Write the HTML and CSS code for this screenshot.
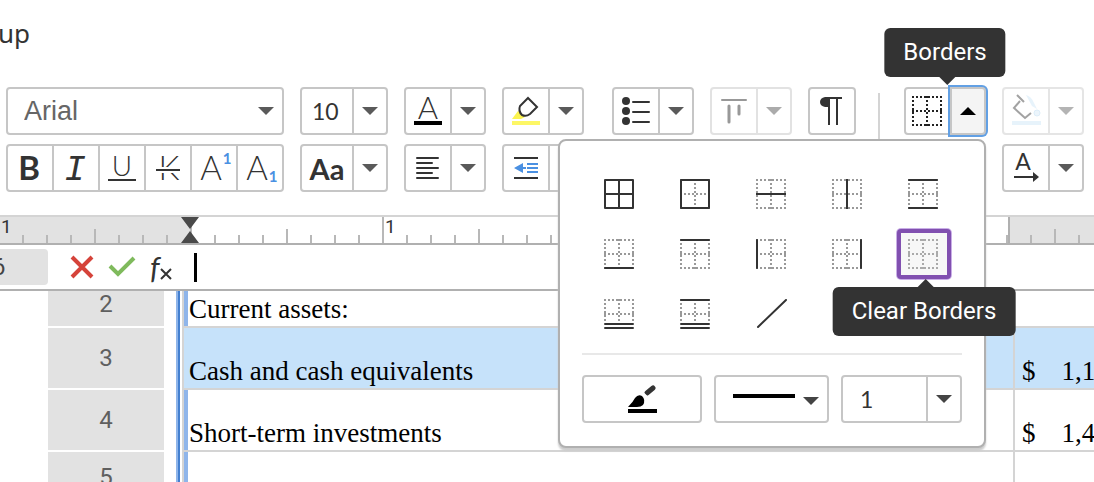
FILE: index.html
```html
<!DOCTYPE html>
<html lang="en">
<head>
<meta charset="utf-8">
<title>Spreadsheet editor</title>
<link rel="stylesheet" href="styles.css">
</head>
<body>
<svg class="defs" aria-hidden="true">
  <symbol id="down" viewBox="0 0 16 8"><path d="M0 0H16L8 8Z" fill="currentColor"/></symbol>
  <symbol id="up" viewBox="0 0 16 8"><path d="M0 8H16L8 0Z" fill="currentColor"/></symbol>
  <symbol id="dots" viewBox="0 0 32 30"><path d="M0 1H30M0 15H30M0 29H30M1 0V30M15 0V30M29 0V30" fill="none" stroke="currentColor" stroke-width="2" stroke-dasharray="2 2"/></symbol>
</svg>
<div class="app">
  <header class="tabs"><span>up</span></header>

  <div class="toolbar">
    <div class="stack">
      <div class="select-box">
        <select aria-label="Font"><option>Arial</option></select>
        <svg class="caret"><use href="#down"/></svg>
      </div>
      <div class="segments">
        <button aria-label="Bold"><svg class="ico"><text x="22" y="35" class="g bold">B</text></svg></button>
        <button aria-label="Italic"><svg class="ico"><text x="22" y="35" class="g slab">I</text></svg></button>
        <button aria-label="Underline"><svg class="ico"><text x="23" y="31" class="g under">U</text><path class="line" d="M9 35H37"/></svg></button>
        <button aria-label="Strikethrough"><svg class="ico"><text x="24" y="35" class="g">K</text><path d="M10 25H36" stroke="#fff" stroke-width="6"/><path class="line" d="M11 25H35"/></svg></button>
        <button aria-label="Superscript"><svg class="ico"><text x="20" y="35" class="g">A</text><text x="36" y="19" class="g mini">1</text></svg></button>
        <button aria-label="Subscript"><svg class="ico"><text x="20" y="35" class="g">A</text><text x="36" y="37" class="g mini">1</text></svg></button>
      </div>
    </div>

    <div class="stack">
      <div class="split wide">
        <input class="main" aria-label="Font size" value="10">
        <button class="drop" aria-label="Font sizes"><svg class="caret"><use href="#down"/></svg></button>
      </div>
      <div class="split wide">
        <button class="main case">Aa</button>
        <button class="drop" aria-label="Text case options"><svg class="caret"><use href="#down"/></svg></button>
      </div>
    </div>

    <div class="stack">
      <div class="split">
        <button class="main" aria-label="Text color"><svg class="ico"><text x="23" y="31" class="g color">A</text><path d="M9 33H37V37H9Z"/></svg></button>
        <button class="drop" aria-label="Text colors"><svg class="caret"><use href="#down"/></svg></button>
      </div>
      <div class="split">
        <button class="main" aria-label="Align left"><svg class="ico"><path class="line round" d="M12 13H33M12 18H27M12 23H33M12 28H27M12 33H33"/></svg></button>
        <button class="drop" aria-label="Alignments"><svg class="caret"><use href="#down"/></svg></button>
      </div>
    </div>

    <div class="stack">
      <div class="split">
        <button class="main" aria-label="Highlight color"><svg class="ico"><path d="M9 31L15 23L22 29L18 31Z" fill="#fbf34f"/><path d="M9 33H37V37H9Z" fill="#fdf765"/><path d="M25 10L34 19L27 26Q23 29 19 27Q15 23 17 18Z" fill="#fff" stroke="#333" stroke-width="2"/></svg></button>
        <button class="drop" aria-label="Highlight colors"><svg class="caret"><use href="#down"/></svg></button>
      </div>
      <div class="split">
        <button class="main" aria-label="Decrease indent"><svg class="ico"><path class="line" d="M11 13H35M11 33H35"/><path d="M11 23L20 18V22H23V24H20V28Z" fill="#4a90e2"/><path d="M24 19H35M24 23H35M24 27H35" stroke="#4a90e2" stroke-width="2"/></svg></button>
        <button class="drop" aria-label="Indents"><svg class="caret"><use href="#down"/></svg></button>
      </div>
    </div>

    <div class="stack after-group">
      <div class="split">
        <button class="main" aria-label="Bulleted list"><svg class="ico"><g fill="#333"><circle cx="13" cy="13" r="4"/><circle cx="13" cy="23" r="4"/><circle cx="13" cy="33" r="4"/></g><path class="line round" d="M20 14H36M20 24H36M20 34H36"/></svg></button>
        <button class="drop" aria-label="List styles"><svg class="caret"><use href="#down"/></svg></button>
      </div>
    </div>

    <div class="stack">
      <div class="split dim">
        <button class="main" disabled aria-label="Vertical align"><svg class="ico"><path class="line round" d="M11 12H35"/><path d="M18 18V34M28 18V26" stroke="#333" stroke-width="3" stroke-linecap="round"/></svg></button>
        <button class="drop" disabled aria-label="Vertical alignments"><svg class="caret"><use href="#down"/></svg></button>
      </div>
    </div>

    <div class="stack">
      <div class="split">
        <button class="main single" aria-label="Paragraph marks"><svg class="ico"><path d="M16 9H21V19H16Q11 18 11 14Q11 10 16 9Z" fill="#333"/><path class="line" d="M16 10H33M20 10V37M28 10V37"/></svg></button>
      </div>
    </div>

    <div class="rule"></div>

    <div class="stack anchor">
      <div class="split">
        <button class="main" aria-label="Apply borders"><svg class="cell strong"><use href="#dots"/></svg></button>
        <button class="drop open" aria-label="Borders" aria-expanded="true"><svg class="caret"><use href="#up"/></svg></button>
      </div>
      <div class="tip above" role="tooltip">Borders</div>

      <div class="popup">
        <div class="choices">
          <button aria-label="All borders"><svg class="cell"><path class="line round" d="M1 1H29V29H1ZM15 1V29M1 15H29"/></svg></button>
          <button aria-label="Outside borders"><svg class="cell"><use href="#dots"/><path class="line round" d="M1 1H29V29H1Z"/></svg></button>
          <button aria-label="Inside horizontal border"><svg class="cell"><use href="#dots"/><path class="line" d="M0 15H30"/></svg></button>
          <button aria-label="Inside vertical border"><svg class="cell"><use href="#dots"/><path class="line" d="M15 0V30"/></svg></button>
          <button aria-label="Top and bottom borders"><svg class="cell"><use href="#dots"/><path class="line round" d="M1 1H29M1 29H29"/></svg></button>
          <button aria-label="Bottom border"><svg class="cell"><use href="#dots"/><path class="line round" d="M1 29H29"/></svg></button>
          <button aria-label="Top border"><svg class="cell"><use href="#dots"/><path class="line round" d="M1 1H29"/></svg></button>
          <button aria-label="Left border"><svg class="cell"><use href="#dots"/><path class="line round" d="M1 1V29"/></svg></button>
          <button aria-label="Right border"><svg class="cell"><use href="#dots"/><path class="line round" d="M29 1V29"/></svg></button>
          <div class="anchor">
            <button class="chosen" aria-label="Clear Borders"><svg class="cell"><use href="#dots"/></svg></button>
            <div class="tip below" role="tooltip">Clear Borders</div>
          </div>
          <button aria-label="Double bottom border"><svg class="cell"><path d="M0 1H30M0 15H30M1 0V24M15 0V24M29 0V24" stroke="#999" stroke-width="2" stroke-dasharray="2 2"/><path class="line round" d="M1 25H29M1 29H29"/></svg></button>
          <button aria-label="Top and double bottom border"><svg class="cell"><path d="M0 15H30M1 0V24M15 0V24M29 0V24" stroke="#999" stroke-width="2" stroke-dasharray="2 2"/><path class="line round" d="M1 1H29M1 25H29M1 29H29"/></svg></button>
          <button aria-label="Diagonal border"><svg class="cell"><path class="line round" d="M2 28L30 1"/></svg></button>
        </div>
        <div class="pen">
          <button class="boxed" aria-label="Border color"><svg class="brush"><path d="M0 22Q5 17 7 13Q10 9 14 11Q18 15 15 20Q13 22 9 22Z"/><path d="M19 8L25 3" stroke="#333" stroke-width="5" stroke-linecap="round"/><path d="M14 7L19 12" stroke="#fff" stroke-width="2"/><path d="M0 24H29V28H0Z"/></svg></button>
          <button class="boxed style" aria-label="Line style"><span class="stroke"></span><svg class="caret"><use href="#down"/></svg></button>
          <div class="split width">
            <input class="main" aria-label="Line width" value="1">
            <button class="drop" aria-label="Line widths"><svg class="caret"><use href="#down"/></svg></button>
          </div>
        </div>
      </div>
    </div>

    <div class="stack">
      <div class="split faint">
        <button class="main" disabled aria-label="Fill color"><svg class="ico"><path d="M14 7L21 14M17 13L11 20L22 30L28 25" fill="none" stroke="#333" stroke-width="2"/><path d="M23 7Q28 8 31 15L34 21L29 18Z" fill="#cbe5f8"/><circle cx="34" cy="25" r="3" fill="#d6ebfa" stroke="#b5d8f2"/><path d="M9 33H38V37H9Z" fill="#cbe5f8"/></svg></button>
        <button class="drop" disabled aria-label="Fill colors"><svg class="caret"><use href="#down"/></svg></button>
      </div>
      <div class="split">
        <button class="main" aria-label="Text direction"><svg class="ico"><text x="20" y="25" class="g dir">A</text><path class="line" d="M11 32H31"/><path d="M30 27L36 32L30 37Z" fill="#333"/></svg></button>
        <button class="drop" aria-label="Text directions"><svg class="caret"><use href="#down"/></svg></button>
      </div>
    </div>
  </div>

  <div class="ruler">
    <span>1</span><span><svg class="marker"><path d="M0 0H18L9 12ZM9 14L18 26H0Z" fill="#4a4a4a"/></svg></span><span>1</span>
  </div>

  <div class="formula">
    <div class="name">6</div>
    <button aria-label="Cancel"><svg width="24" height="24"><path d="M2 2L22 22M22 2L2 22" stroke="#d5433a" stroke-width="4"/></svg></button>
    <button aria-label="Accept"><svg width="28" height="22"><path d="M2 10L10 18L26 2" fill="none" stroke="#7fba5c" stroke-width="4"/></svg></button>
    <button class="fx" aria-label="Insert function"><i>f</i><svg width="12" height="12"><path d="M1 1L11 11M11 1L1 11" stroke="#333" stroke-width="2"/></svg></button>
    <span class="cursor"></span>
    <input aria-label="Formula">
  </div>

  <div class="sheet">
    <table>
      <colgroup><col class="c-head"><col class="c-gap"><col class="c-text"><col></colgroup>
      <tr class="first"><th scope="row">2</th><td class="gap"></td><td class="text">Current assets:</td><td class="value blank"></td></tr>
      <tr class="selected"><th scope="row">3</th><td class="gap"></td><td class="text">Cash and cash equivalents</td><td class="value"><span>$</span>1,1</td></tr>
      <tr><th scope="row">4</th><td class="gap"></td><td class="text">Short-term investments</td><td class="value"><span>$</span>1,4</td></tr>
      <tr class="last"><th scope="row">5</th><td class="gap"></td><td class="text"></td><td class="value"></td></tr>
    </table>
  </div>
</div>
</body>
</html>
```
FILE: styles.css
```css
* { box-sizing: border-box; }

body {
  margin: 0;
  background: #fff;
  color: #333;
  font-family: Roboto, "Liberation Sans", sans-serif;
  font-size: 24px;
}

.app { height: 100vh; overflow: hidden; }
.defs { display: none; }

button, input, select {
  margin: 0;
  padding: 0;
  border: 0;
  background: none;
  color: inherit;
  font: inherit;
}
button { display: flex; align-items: center; justify-content: center; }
svg { display: block; flex: none; }

.caret { width: 16px; height: 8px; color: #5a5a5a; }
.ico { width: 46px; height: 46px; }
.cell { width: 32px; height: 30px; color: #999; }
.cell.strong { color: #222; }
.line { fill: none; stroke: #333; stroke-width: 2; }
.round { stroke-linecap: round; stroke-linejoin: round; }

.g { font-family: Lato, sans-serif; font-size: 33px; font-weight: 300; fill: #333; text-anchor: middle; }
.g.bold { font-weight: 700; }
.g.slab { font-family: "Liberation Mono", monospace; font-style: italic; font-size: 36px; }
.g.under { font-size: 28px; }
.g.color { font-size: 31px; }
.g.mini { font-size: 15px; font-weight: 700; fill: #4a90e2; }
.g.dir { font-size: 23px; font-weight: 400; }

.tabs { height: 87px; padding-top: 17px; font: 26px/32px "Noto Sans", sans-serif; }
.tabs span { margin-left: -2px; }

.toolbar {
  display: flex;
  gap: 16px;
  height: 128px;
  padding-left: 6px;
  position: relative;
  z-index: 2;
}
.stack { display: flex; flex-direction: column; flex: none; gap: 9px; }
.after-group { margin-left: 12px; }
.anchor { position: relative; }
.rule { width: 2px; height: 52px; margin: 6px 8px 0 6px; background: #d4d4d4; flex: none; }

.select-box {
  display: grid;
  grid-template-columns: 1fr 24px;
  align-items: center;
  width: 278px;
  height: 48px;
  border: 2px solid #c6c6c6;
  border-radius: 4px;
}
.select-box select {
  grid-area: 1 / 1 / 2 / 3;
  height: 44px;
  padding-left: 16px;
  appearance: none;
  font: 27px "Liberation Sans", sans-serif;
  color: #666;
}
.select-box .caret { grid-area: 1 / 2; pointer-events: none; }

.segments {
  display: flex;
  width: 278px;
  height: 48px;
  border: 2px solid #c6c6c6;
  border-radius: 4px;
}
.segments button { flex: 1; overflow: hidden; }
.segments button + button { border-left: 2px solid #c6c6c6; }

.split { display: flex; height: 48px; }
.main, .drop, .boxed { height: 48px; border: 2px solid #c6c6c6; background: #fff; }
.main { width: 48px; border-radius: 4px 0 0 4px; }
.main.single { border-radius: 4px; }
.drop { width: 36px; margin-left: -2px; border-radius: 0 4px 4px 0; }
.wide .main { width: 54px; }
input.main { padding-left: 10px; font: 23px Lato, sans-serif; }
.case { font: 700 29px Lato, sans-serif; }
.dim { opacity: 0.5; }
.faint { opacity: 0.45; }
.open { position: relative; background: #f4f4f4; box-shadow: 0 0 0 2px #62a0e4; }
.open .caret { color: #000; }

.tip {
  position: absolute;
  left: 50%;
  transform: translateX(-50%);
  height: 49px;
  padding: 0 19px;
  border-radius: 6px;
  background: #333;
  color: #fff;
  line-height: 48px;
  white-space: nowrap;
}
.tip::after {
  content: "";
  position: absolute;
  left: 50%;
  margin-left: -6px;
  border: 8px solid transparent;
}
.above { top: -59px; }
.above::after { top: 100%; border-top-color: #333; border-bottom: 0; }
.below { top: 58px; z-index: 1; }
.below::after { bottom: 100%; border-bottom-color: #333; border-top: 0; }

.popup {
  position: absolute;
  top: 52px;
  right: 0;
  padding: 23px 22px;
  border: 2px solid #b0b0b0;
  border-radius: 8px;
  background: #fff;
  box-shadow: 0 3px 2px #ccc;
}
.choices {
  display: grid;
  grid-template-columns: repeat(5, 76px);
  grid-auto-rows: 60px;
  place-items: center;
  padding-bottom: 9px;
  border-bottom: 2px solid #e8e8e8;
  box-sizing: content-box;
}
.choices button { width: 54px; height: 50px; }
.choices .chosen {
  border: 4px solid #8150b0;
  border-radius: 4px;
  background: #f7f7f7;
  box-shadow: 0 0 0 1px #c9aee6;
}
.chosen .cell { color: #aaa; }
.pen { display: flex; gap: 12px; padding-top: 20px; }
.pen .caret { color: #444; }
.boxed { width: 120px; border-radius: 4px; }
.boxed.style { width: 115px; gap: 8px; padding: 4px 0 0 8px; }
.stroke { width: 62px; height: 4px; margin-bottom: 10px; background: #000; }
.brush { width: 29px; height: 28px; }
.width { flex: 1; }
.width .main { flex: 1; width: 40px; padding-left: 17px; }

.ruler {
  display: flex;
  height: 30px;
  border-top: 2px solid #d4d4d4;
  border-bottom: 2px solid #b0b0b0;
  background:
    repeating-linear-gradient(90deg, #b8b8b8 0 2px, transparent 2px 24px) -2px 100% / 1920px 8px no-repeat,
    linear-gradient(90deg, #b8b8b8 2px, transparent 2px) 94px 100% / 192px 14px repeat-x,
    linear-gradient(90deg, #b8b8b8 2px, transparent 2px) -2px 0 / 192px 26px repeat-x,
    linear-gradient(90deg, #e2e2e2 190px, transparent 190px 1008px, #b0b0b0 1008px 1010px, #e2e2e2 1010px);
}
.ruler span { width: 192px; padding-left: 3px; font-size: 19px; line-height: 20px; }
.ruler span:first-child { width: 190px; padding-left: 1px; }
.marker { width: 18px; height: 26px; margin-left: -12px; }

.formula {
  display: flex;
  align-items: center;
  height: 46px;
  border-bottom: 2px solid #b0b0b0;
}
.name {
  width: 48px;
  height: 36px;
  margin-right: 22px;
  border-radius: 0 4px 4px 0;
  background: #e2e2e2;
  line-height: 36px;
  text-indent: -8px;
  color: #444;
}
.formula button + button { margin-left: 14px; }
.fx { font: 30px Lato, sans-serif; }
.fx svg { margin-top: 14px; }
.cursor { width: 3px; height: 29px; margin-left: 22px; background: #000; }
.formula input { flex: 1; min-width: 0; outline: 0; }

.sheet { padding-left: 48px; overflow: hidden; }
table { width: 100%; table-layout: fixed; border-collapse: separate; border-spacing: 0; }
.c-head { width: 116px; }
.c-gap { width: 18px; }
.c-text { width: 831px; }
tr { height: 62px; }
th, td { padding: 0; border-bottom: 2px solid #d4d4d4; }
th { border-color: #fff; background: #e2e2e2; color: #5f5f5f; font-weight: 400; }
.gap {
  border: 0;
  background: linear-gradient(90deg, #fff 12px, #8fb5ea 12px 14px, #4480d0 14px 16px, #fff 16px);
}
.text, .value {
  vertical-align: bottom;
  padding-bottom: 2px;
  font: 27px/30px "Liberation Serif", serif;
  color: #000;
  white-space: nowrap;
}
.text {
  padding-left: 5px;
  border-left: 2px solid #d4d4d4;
  background: linear-gradient(90deg, #8fb5ea 4px, #fff 4px);
}
.value { padding-left: 7px; border-left: 2px solid #d4d4d4; }
.value span { margin-right: 26px; }
.value.blank { border-left-color: #fff; }
.first { height: 37px; }
.first th { padding-bottom: 10px; line-height: 24px; }
.selected .text, .selected .value { background: #c6e2fa; }
.last { height: 52px; }
```
